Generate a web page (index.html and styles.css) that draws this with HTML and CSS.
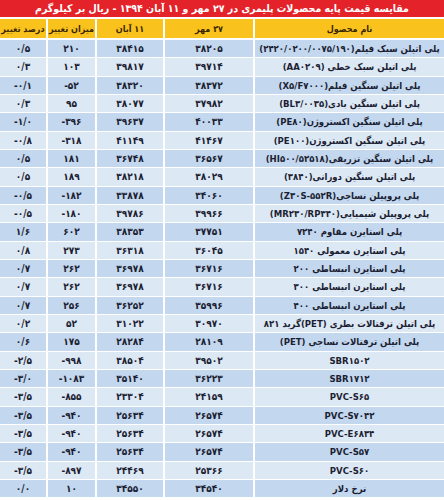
FILE: index.html
```html
<!DOCTYPE html>
<html lang="fa" dir="rtl">
<head>
<meta charset="utf-8">
<link rel="stylesheet" href="styles.css">
</head>
<body>
<div class="sheet">
  <div class="title">مقایسه قیمت پایه محصولات پلیمری در ۲۷ مهر و ۱۱ آبان ۱۳۹۴ - ریال بر کیلوگرم</div>
  <div class="row head">
    <div>نام محصول</div><div>۲۷ مهر</div><div>۱۱ آبان</div><div>میزان تغییر</div><div>درصد تغییر</div>
  </div>
  <div class="body">
    <div class="row"><div class="name">پلی اتیلن سبک فیلم(۲۴۲۰/۰۲۰۰/۰۰۷۵/۱۹۰)</div><div class="n">۳۸۲۰۵</div><div class="n">۳۸۴۱۵</div><div class="n">۲۱۰</div><div class="n">۰/۵</div></div>
    <div class="row"><div class="name">پلی اتیلن سبک خطی (AA۰۲۰۹)</div><div class="n">۳۹۷۱۴</div><div class="n">۳۹۸۱۷</div><div class="n">۱۰۳</div><div class="n">۰/۳</div></div>
    <div class="row"><div class="name">پلی اتیلن سنگین فیلم(X۵/F۷۰۰۰)</div><div class="n">۳۸۳۷۲</div><div class="n">۳۸۳۲۰</div><div class="n">-۵۲</div><div class="n">-۰/۱</div></div>
    <div class="row"><div class="name">پلی اتیلن سنگین بادی(BL۳/۰۰۳۵)</div><div class="n">۳۷۹۸۲</div><div class="n">۳۸۰۷۷</div><div class="n">۹۵</div><div class="n">۰/۳</div></div>
    <div class="row"><div class="name">پلی اتیلن سنگین اکستروژن(PE۸۰)</div><div class="n">۴۰۰۳۳</div><div class="n">۳۹۶۳۷</div><div class="n">-۳۹۶</div><div class="n">-۱/۰</div></div>
    <div class="row"><div class="name">پلی اتیلن سنگین اکستروژن(PE۱۰۰)</div><div class="n">۴۱۴۶۷</div><div class="n">۴۱۱۴۹</div><div class="n">-۳۱۸</div><div class="n">-۰/۸</div></div>
    <div class="row"><div class="name">پلی اتیلن سنگین تزریقی(HI۵۰۰/۵۲۵۱۸)</div><div class="n">۳۶۵۶۷</div><div class="n">۳۶۷۴۸</div><div class="n">۱۸۱</div><div class="n">۰/۵</div></div>
    <div class="row"><div class="name">پلی اتیلن سنگین دورانی(۳۸۴۰)</div><div class="n">۳۸۰۲۹</div><div class="n">۳۸۲۱۸</div><div class="n">۱۸۹</div><div class="n">۰/۵</div></div>
    <div class="row"><div class="name">پلی پروپیلن نساجی(Z۳۰S-۵۵۲R)</div><div class="n">۳۴۰۶۰</div><div class="n">۳۳۸۷۸</div><div class="n">-۱۸۲</div><div class="n">-۰/۵</div></div>
    <div class="row"><div class="name">پلی پروپیلن شیمیایی(MR۲۳۰/RP۳۴۰)</div><div class="n">۳۹۹۶۶</div><div class="n">۳۹۷۸۶</div><div class="n">-۱۸۰</div><div class="n">-۰/۵</div></div>
    <div class="row"><div class="name">پلی استایرن مقاوم ۷۲۴۰</div><div class="n">۳۷۷۵۱</div><div class="n">۳۸۳۵۳</div><div class="n">۶۰۲</div><div class="n">۱/۶</div></div>
    <div class="row"><div class="name">پلی استایرن معمولی ۱۵۴۰</div><div class="n">۳۶۰۴۵</div><div class="n">۳۶۳۱۸</div><div class="n">۲۷۳</div><div class="n">۰/۸</div></div>
    <div class="row"><div class="name">پلی استایرن انبساطی ۲۰۰</div><div class="n">۳۶۷۱۶</div><div class="n">۳۶۹۷۸</div><div class="n">۲۶۲</div><div class="n">۰/۷</div></div>
    <div class="row"><div class="name">پلی استایرن انبساطی ۳۰۰</div><div class="n">۳۶۷۱۶</div><div class="n">۳۶۹۷۸</div><div class="n">۲۶۲</div><div class="n">۰/۷</div></div>
    <div class="row"><div class="name">پلی استایرن انبساطی ۴۰۰</div><div class="n">۳۵۹۹۶</div><div class="n">۳۶۲۵۲</div><div class="n">۲۵۶</div><div class="n">۰/۷</div></div>
    <div class="row"><div class="name">پلی اتیلن ترفتالات بطری (PET)گرید ۸۲۱</div><div class="n">۳۰۹۷۰</div><div class="n">۳۱۰۲۲</div><div class="n">۵۲</div><div class="n">۰/۲</div></div>
    <div class="row"><div class="name">پلی اتیلن ترفتالات نساجی (PET)</div><div class="n">۲۸۱۰۹</div><div class="n">۲۸۲۸۴</div><div class="n">۱۷۵</div><div class="n">۰/۶</div></div>
    <div class="row"><div class="name">SBR۱۵۰۲</div><div class="n">۳۹۵۰۲</div><div class="n">۳۸۵۰۴</div><div class="n">-۹۹۸</div><div class="n">-۲/۵</div></div>
    <div class="row"><div class="name">SBR۱۷۱۲</div><div class="n">۳۶۲۲۳</div><div class="n">۳۵۱۴۰</div><div class="n">-۱۰۸۳</div><div class="n">-۳/۰</div></div>
    <div class="row"><div class="name">PVC-S۶۵</div><div class="n">۲۴۱۵۹</div><div class="n">۲۳۳۰۴</div><div class="n">-۸۵۵</div><div class="n">-۳/۵</div></div>
    <div class="row"><div class="name">PVC-S۷۰۴۲</div><div class="n">۲۶۵۷۴</div><div class="n">۲۵۶۳۴</div><div class="n">-۹۴۰</div><div class="n">-۳/۵</div></div>
    <div class="row"><div class="name">PVC-E۶۸۳۴</div><div class="n">۲۶۵۷۴</div><div class="n">۲۵۶۳۴</div><div class="n">-۹۴۰</div><div class="n">-۳/۵</div></div>
    <div class="row"><div class="name">PVC-S۵۷</div><div class="n">۲۶۵۷۴</div><div class="n">۲۵۶۳۴</div><div class="n">-۹۴۰</div><div class="n">-۳/۵</div></div>
    <div class="row"><div class="name">PVC-S۶۰</div><div class="n">۲۵۳۶۶</div><div class="n">۲۴۴۶۹</div><div class="n">-۸۹۷</div><div class="n">-۳/۵</div></div>
    <div class="row"><div class="name">نرخ دلار</div><div class="n">۳۴۵۴۰</div><div class="n">۳۴۵۵۰</div><div class="n">۱۰</div><div class="n">۰/۰</div></div>
  </div>
</div>
</body>
</html>
```

FILE: styles.css
```css
html, body {
  margin: 0;
  padding: 0;
  background: #ffffff;
}

body {
  font-family: "DejaVu Sans Condensed", "DejaVu Sans", sans-serif;
  font-stretch: condensed;
  width: 444px;
  height: 500px;
  overflow: hidden;
}

.sheet {
  direction: rtl;
  display: flex;
  flex-direction: column;
  width: 444px;
}

.title {
  height: 17px;
  line-height: 17px;
  background: #e3222a;
  color: #ffffff;
  font-size: 10.5px;
  font-weight: bold;
  text-align: center;
  white-space: nowrap;
  overflow: hidden;
}

.row {
  display: grid;
  grid-template-columns: 189px 88px 66px 47px 46px;
  column-gap: 2px;
  height: 17.33px;
}

.row > div {
  display: flex;
  align-items: center;
  justify-content: center;
  white-space: nowrap;
  overflow: hidden;
  font-size: 10px;
  font-weight: bold;
  color: #1c1f33;
}

.head {
  margin-top: 2px;
  height: 19px;
}

.head > div {
  background: #f9c21c;
  color: #3a2600;
  font-size: 9px;
}

.body {
  margin-top: 2px;
  display: flex;
  flex-direction: column;
  row-gap: 1px;
}

.body .row:nth-child(odd) > div {
  background: #c3d7ef;
}

.body .row:nth-child(even) > div {
  background: #dde8f5;
}

.n {
  direction: ltr;
}

.row > .name {
  font-size: 9.5px;
}
```
